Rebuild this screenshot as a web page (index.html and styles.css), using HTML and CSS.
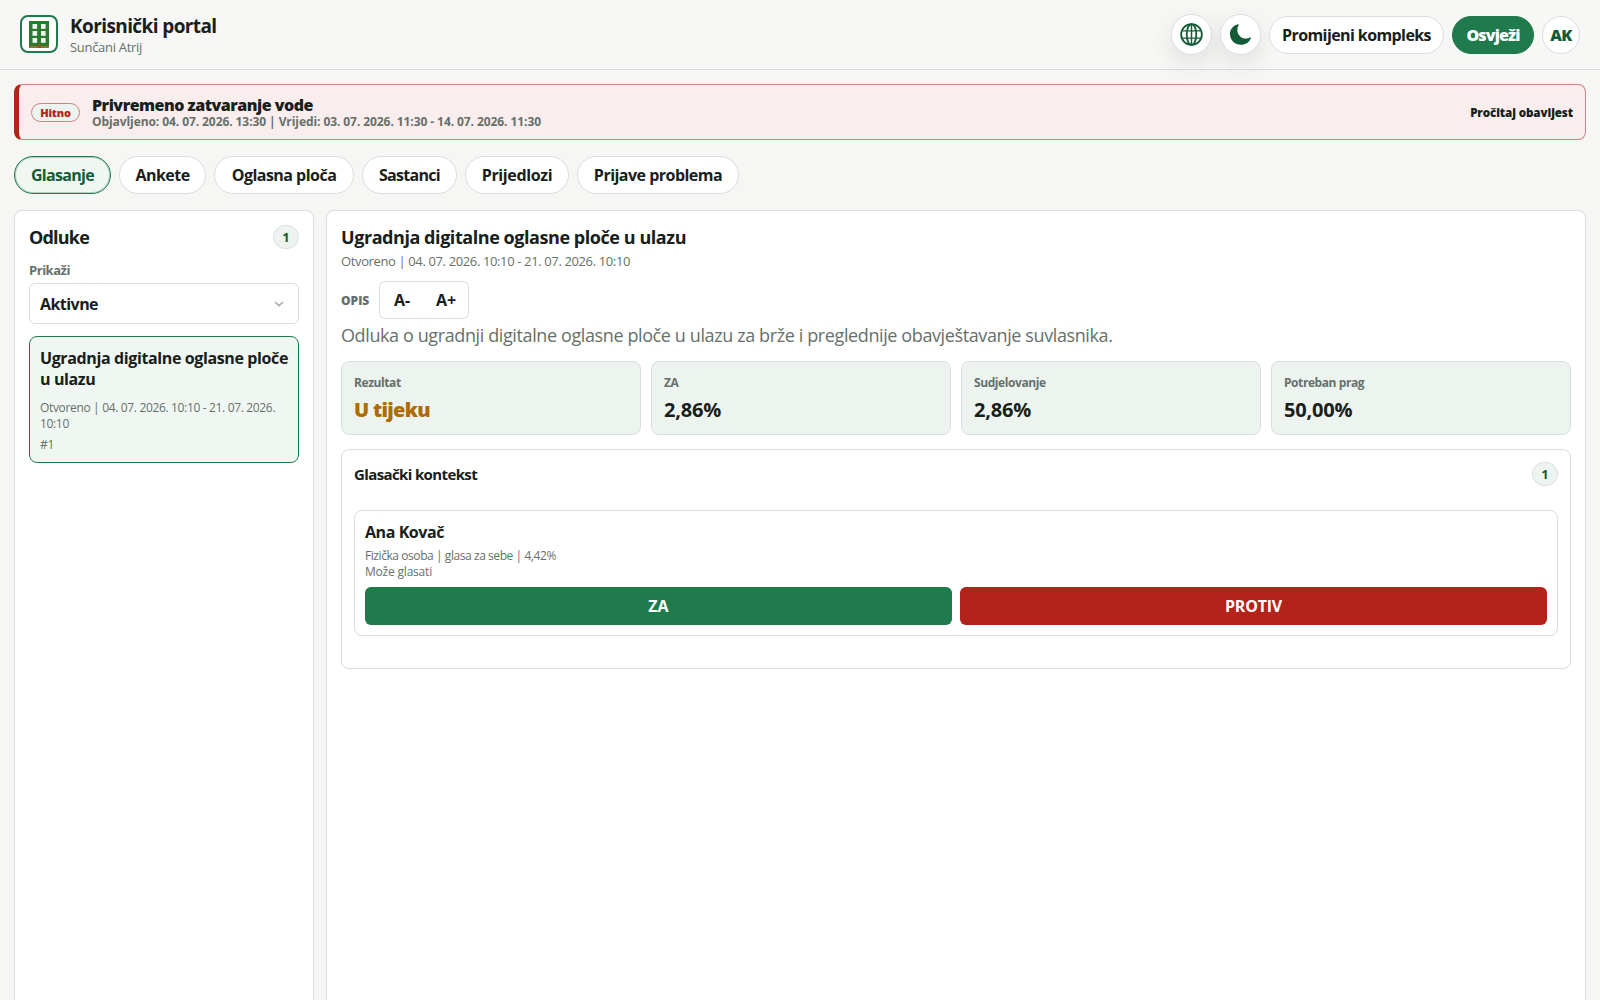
FILE: index.html
```html
<!DOCTYPE html>
<html lang="hr">
<head>
<meta charset="UTF-8">
<meta name="viewport" content="width=device-width, initial-scale=1.0">
<title>Korisnički portal</title>
<link rel="stylesheet" href="styles.css">
</head>
<body>
  <header class="topbar">
    <div class="brand">
      <span class="brand-logo">
        <svg width="20" height="27" viewBox="0 0 20 27">
          <rect width="20" height="27" fill="#2a7a30"/>
          <g fill="#eef6ee">
            <rect x="3.5" y="3" width="4.6" height="4.8"/><rect x="12" y="3" width="4.6" height="4.8"/>
            <rect x="3.5" y="10" width="4.6" height="4.8"/><rect x="12" y="10" width="4.6" height="4.8"/>
            <rect x="3.5" y="17" width="4.6" height="4.8"/><rect x="12" y="17" width="4.6" height="4.8"/>
          </g>
          <rect y="25" width="20" height="2" fill="#92702e"/>
          <rect x="8.3" y="23" width="3.4" height="4" fill="#87561c"/>
        </svg>
      </span>
      <div>
        <h1>Korisnički portal</h1>
        <p class="brand-sub">Sunčani Atrij</p>
      </div>
    </div>
    <div class="actions">
      <button class="icon-btn" aria-label="Jezik">
        <svg width="23" height="23" viewBox="0 0 24 24" fill="none" stroke="#145c38" stroke-width="1.9">
          <circle cx="12" cy="12" r="10.8"/>
          <ellipse cx="12" cy="12" rx="5" ry="10.8"/>
          <path d="M12 1.4v21.2M2.4 8.2h19.2M2.4 15.8h19.2" stroke-width="1.5"/>
        </svg>
      </button>
      <button class="icon-btn" aria-label="Tema">
        <svg width="23" height="23" viewBox="0 0 24 24" fill="#145c38">
          <path d="M9.4 1.2C4.600 2.200 1 6.300 1 11.500 1 17.800 6.100 22.800 12.300 22.800 17.300 22.800 21.500 20 22.900 15.700 23.100 15 22.500 14.800 22 15.100 20.800 15.800 19.300 16.200 17.700 16.200 12.600 16.200 8.700 12.200 8.700 7.200 8.700 5.400 9.200 3.700 10.100 2.200 10.400 1.500 10 1.100 9.400 1.200Z"/>
        </svg>
      </button>
      <button class="pill">Promijeni kompleks</button>
      <button class="pill primary">Osvježi</button>
      <button class="avatar">AK</button>
    </div>
  </header>

  <main>
    <section class="alert">
      <span class="alert-tag">Hitno</span>
      <div class="alert-text">
        <strong>Privremeno zatvaranje vode</strong>
        <small>Objavljeno: 04. 07. 2026. 13:30 | Vrijedi: 03. 07. 2026. 11:30 - 14. 07. 2026. 11:30</small>
      </div>
      <span class="alert-link">Pročitaj obavijest</span>
    </section>

    <nav class="tabs">
      <button class="tab tab-glasanje active">Glasanje</button>
      <button class="tab tab-ankete">Ankete</button>
      <button class="tab tab-ploca">Oglasna ploča</button>
      <button class="tab tab-sastanci">Sastanci</button>
      <button class="tab tab-prijedlozi">Prijedlozi</button>
      <button class="tab tab-prijave">Prijave problema</button>
    </nav>

    <div class="layout">
      <aside class="panel sidebar">
        <div class="panel-head">
          <h2 class="side-title">Odluke</h2>
          <span class="count">1</span>
        </div>
        <div class="filter-label">Prikaži</div>
        <div class="select">
          <span>Aktivne</span>
          <svg width="10" height="6" viewBox="0 0 10 6" fill="none" stroke="#a3b1a9" stroke-width="1.6"><path d="M1 1l4 3.700L9 1"/></svg>
        </div>
        <article class="decision">
          <h3>Ugradnja digitalne oglasne ploče u ulazu</h3>
          <p>Otvoreno | 04. 07. 2026. 10:10 - 21. 07. 2026. 10:10</p>
          <p class="decision-no">#1</p>
        </article>
      </aside>

      <section class="panel detail">
        <h2>Ugradnja digitalne oglasne ploče u ulazu</h2>
        <p class="period">Otvoreno | 04. 07. 2026. 10:10 - 21. 07. 2026. 10:10</p>
        <div class="desc-bar">
          <span class="desc-label">OPIS</span>
          <div class="font-size">
            <button>A-</button>
            <button>A+</button>
          </div>
        </div>
        <p class="desc">Odluka o ugradnji digitalne oglasne ploče u ulazu za brže i preglednije obavještavanje suvlasnika.</p>

        <div class="metrics">
          <div class="metric"><span>Rezultat</span><strong class="pending">U tijeku</strong></div>
          <div class="metric"><span>ZA</span><strong>2,86%</strong></div>
          <div class="metric"><span>Sudjelovanje</span><strong>2,86%</strong></div>
          <div class="metric"><span>Potreban prag</span><strong>50,00%</strong></div>
        </div>

        <div class="context">
          <div class="context-head">
            <h3>Glasački kontekst</h3>
            <span class="count">1</span>
          </div>
          <div class="voter">
            <h4>Ana Kovač</h4>
            <p>Fizička osoba | glasa za sebe | 4,42%</p>
            <p class="voter-state">Može glasati</p>
            <div class="vote-row">
              <button class="vote yes">ZA</button>
              <button class="vote no">PROTIV</button>
            </div>
          </div>
        </div>
      </section>
    </div>
  </main>
</body>
</html>
```

FILE: styles.css
```css
* {
  box-sizing: border-box;
}
html, body {
  height: 100%;
}
body {
  margin: 0;
  overflow: hidden;
  background: #f6f6f4;
  color: #17201b;
  font-family: "Segoe UI", "Open Sans", "Noto Sans", sans-serif;
  font-size: 16px;
}
h1, h2, h3, h4, p {
  margin: 0;
}
button {
  font: inherit;
  font-weight: 700;
  color: inherit;
  padding: 0;
  background: #fff;
  border: 1px solid #d8e0db;
}
svg {
  display: block;
}

/* header */
.topbar {
  height: 70px;
  padding: 0 20px;
  display: flex;
  align-items: center;
  justify-content: space-between;
  border-bottom: 1px solid #d9dcda;
  background: #f7f7f5;
}
.brand {
  display: flex;
  align-items: center;
  gap: 12px;
}
.brand-logo {
  width: 38px;
  height: 38px;
  margin-bottom: 1px;
  display: grid;
  place-items: center;
  border: 2px solid #1f7a4c;
  border-radius: 8px;
  background: #fff;
}
.brand h1 {
  padding-top: 1px;
  font-size: 19px;
  line-height: 24px;
  letter-spacing: -0.6px;
}
.brand-sub {
  font-size: 13px;
  line-height: 19px;
  letter-spacing: -0.3px;
  color: #66706a;
}
.actions {
  display: flex;
  align-items: center;
  gap: 8px;
}
.icon-btn {
  width: 41px;
  height: 41px;
  display: grid;
  place-items: center;
  border-radius: 50%;
  box-shadow: 0 8px 24px rgba(23, 32, 27, 0.1);
}
.pill {
  width: 175px;
  height: 38px;
  border-radius: 19px;
  letter-spacing: -0.59px;
}
.primary {
  width: 82px;
  background: #1f7a4c;
  border-color: #1f7a4c;
  color: #fff;
  font-weight: 800;
  letter-spacing: -0.88px;
}
.avatar {
  width: 38px;
  height: 38px;
  border-radius: 50%;
  color: #145c38;
  font-weight: 800;
  letter-spacing: -0.55px;
}

/* urgent notice */
main {
  height: calc(100% - 70px);
  padding: 14px 14px 0;
  overflow: hidden;
}
.alert {
  height: 56px;
  display: flex;
  align-items: center;
  gap: 12px;
  padding: 0 12px;
  border: 1px solid #c98580;
  border-left: 5px solid #b32319;
  border-radius: 8px;
  background: #f9eded;
}
.alert-tag {
  width: 49px;
  height: 19px;
  text-align: center;
  font-size: 11px;
  line-height: 17px;
  font-weight: 800;
  letter-spacing: -0.19px;
  color: #b32319;
  border: 1px solid #c98580;
  border-radius: 10px;
  background: #edf3ef;
}
.alert-text {
  flex: 1;
  padding-top: 2px;
}
.alert-text strong,
.alert-text small {
  display: block;
}
.alert-text strong {
  font-weight: 800;
  line-height: 17px;
  letter-spacing: -0.49px;
}
.alert-text small {
  font-size: 12px;
  line-height: 15px;
  font-weight: 700;
  letter-spacing: -0.08px;
  color: #66706a;
}
.alert-link {
  font-size: 11.6px;
  font-weight: 800;
  letter-spacing: -0.1px;
}

/* tabs */
.tabs {
  display: flex;
  gap: 8px;
  margin: 16px 0;
}
.tab {
  height: 38px;
  border-radius: 19px;
  letter-spacing: -0.52px;
}
.tab.active {
  background: #f0f7f3;
  border-color: #1f7a4c;
  box-shadow: inset 0 0 0 1px rgba(31, 122, 76, 0.3);
  color: #145c38;
}
.tab-glasanje { width: 97px; letter-spacing: -0.7px; }
.tab-ankete { width: 87px; }
.tab-ploca { width: 140px; }
.tab-sastanci { width: 95px; letter-spacing: -0.7px; }
.tab-prijedlozi { width: 104px; letter-spacing: -0.36px; }
.tab-prijave { width: 162px; }

/* panels */
.layout {
  display: grid;
  grid-template-columns: 300px 1fr;
  gap: 12px;
}
.panel {
  height: 790px;
  padding: 14px;
  border: 1px solid #d8e0db;
  border-bottom: 0;
  border-radius: 8px 8px 0 0;
  background: #fff;
}
.panel h2 {
  font-size: 18px;
  line-height: 24px;
  letter-spacing: -0.44px;
}
.panel .side-title {
  letter-spacing: -0.8px;
}
.panel-head, .context-head {
  display: flex;
  align-items: center;
  justify-content: space-between;
}
.count {
  width: 26px;
  height: 24px;
  text-align: center;
  font-size: 13px;
  line-height: 23px;
  font-weight: 700;
  color: #145c38;
  border: 1px solid #d8e0db;
  border-radius: 13px;
  background: #edf3ef;
}
.filter-label {
  margin-top: 12px;
  font-size: 13px;
  line-height: 18px;
  font-weight: 700;
  letter-spacing: -0.47px;
  color: #66706a;
}
.select {
  height: 41px;
  margin: 4px 0 12px;
  padding: 0 14px 0 10px;
  display: flex;
  align-items: center;
  justify-content: space-between;
  font-weight: 700;
  letter-spacing: -0.55px;
  border: 1px solid #d8e0db;
  border-radius: 6px;
}
.decision {
  height: 127px;
  padding: 11px 0 0 10px;
  border: 1px solid #1f7a4c;
  border-radius: 8px;
  background: #f0f7f3;
}
.decision h3 {
  font-size: 16px;
  line-height: 21px;
  letter-spacing: -0.38px;
}
.decision p {
  margin-top: 10px;
  font-size: 12px;
  line-height: 16px;
  letter-spacing: -0.34px;
  color: #66706a;
}
.decision .decision-no {
  margin-top: 5px;
}

/* decision detail */
.period {
  margin-top: 3px;
  font-size: 13px;
  line-height: 18px;
  letter-spacing: -0.37px;
  color: #66706a;
}
.desc-bar {
  margin-top: 11px;
  display: flex;
  align-items: center;
  gap: 9px;
}
.desc-label {
  width: 29px;
  font-size: 12px;
  font-weight: 800;
  color: #66706a;
}
.font-size {
  width: 90px;
  height: 38px;
  display: grid;
  grid-template-columns: 1fr 1fr;
  border: 1px solid #d8e0db;
  border-radius: 6px;
}
.font-size button {
  border: 0;
  background: none;
}
.desc {
  margin-top: 2px;
  font-size: 18px;
  line-height: 28px;
  letter-spacing: -0.39px;
  color: #66706a;
}
.metrics {
  display: grid;
  grid-template-columns: repeat(4, 1fr);
  gap: 10px;
  margin-top: 12px;
}
.metric {
  height: 74px;
  padding: 12px 12px 0;
  border: 1px solid #d8e0db;
  border-radius: 8px;
  background: #edf3ef;
}
.metric span, .metric strong {
  display: block;
}
.metric span {
  font-size: 12px;
  line-height: 18px;
  font-weight: 700;
  letter-spacing: -0.42px;
  color: #66706a;
}
.metric strong {
  margin-top: 5px;
  font-size: 20px;
  line-height: 26px;
  letter-spacing: -0.21px;
}
.metric .pending {
  font-weight: 800;
  letter-spacing: -0.68px;
  color: #ad6b00;
}
.context {
  height: 220px;
  margin-top: 14px;
  padding: 12px;
  border: 1px solid #d8e0db;
  border-radius: 8px;
}
.context h3 {
  font-size: 15px;
  line-height: 24px;
  letter-spacing: -0.62px;
}
.voter {
  height: 126px;
  margin-top: 24px;
  padding: 10px;
  border: 1px solid #d8e0db;
  border-radius: 8px;
}
.voter h4 {
  margin-bottom: 5px;
  line-height: 22px;
  letter-spacing: -0.43px;
}
.voter p {
  font-size: 12px;
  line-height: 16px;
  letter-spacing: -0.43px;
  color: #66706a;
}
.voter .voter-state {
  letter-spacing: -0.2px;
}
.vote-row {
  display: grid;
  grid-template-columns: 1fr 1fr;
  gap: 8px;
  margin-top: 7px;
}
.vote {
  height: 38px;
  border: 0;
  border-radius: 6px;
  color: #fff;
}
.yes {
  background: #1f7a4c;
}
.no {
  background: #b32319;
  letter-spacing: -0.22px;
}
```
